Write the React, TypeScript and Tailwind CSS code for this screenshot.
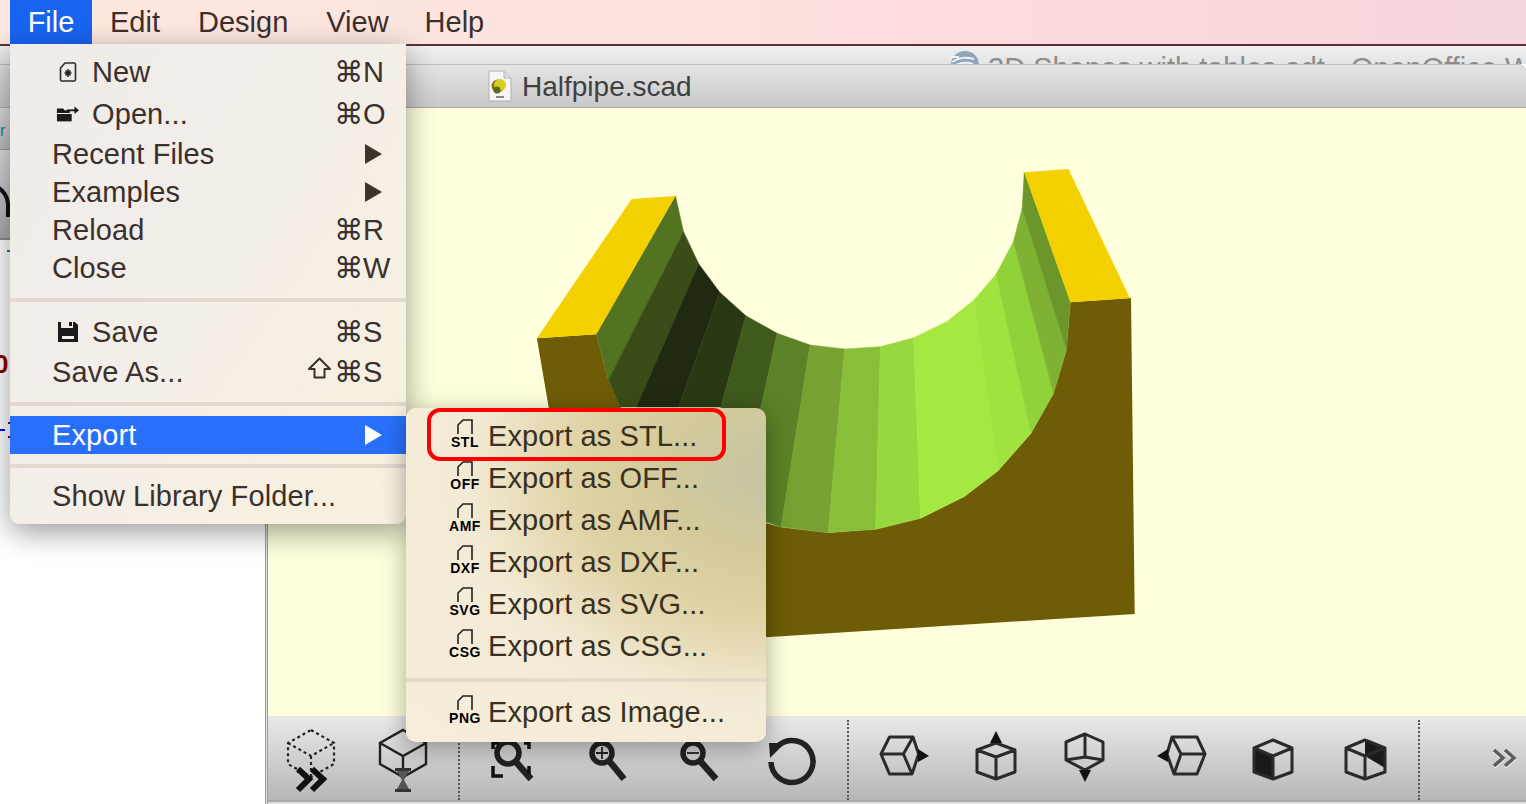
import type { ReactNode } from "react";

const strips: { points: string; color: string }[] = [
  { points: "675.5,196 683.5,231.7 608.4,380 596.3,334.3", color: "#52731f" },
  { points: "683.5,231.7 698.8,264 636.5,407 620.4,407 608.4,380", color: "#3a4d18" },
  { points: "698.8,264 719.7,292.3 678.7,407 636.5,407", color: "#1f2a10" },
  { points: "719.7,292.3 745.8,315.7 720.9,407 678.7,407", color: "#293914" },
  { points: "745.8,315.7 777.1,333.3 761,407 740,480 700,480 720.9,407", color: "#3f5a1c" },
  { points: "777.1,333.3 810.1,345 781.2,527 730,510 761,407", color: "#5b8226" },
  { points: "810.1,345 844.6,349 828.2,532.7 781.2,527", color: "#76a232" },
  { points: "844.6,349 880.4,346.7 875.6,529.3 828.2,532.7", color: "#89bf38" },
  { points: "880.4,346.7 913.7,337.7 920.6,518.3 875.6,529.3", color: "#98d83f" },
  { points: "913.7,337.7 946.7,321.7 964,496.7 920.6,518.3", color: "#a5e842" },
  { points: "946.7,321.7 974,300 998.1,470.7 964,496.7", color: "#a5e842" },
  { points: "974,300 996.1,274.3 1031,433.3 998.1,470.7", color: "#a0e23f" },
  { points: "996.1,274.3 1013.4,241.7 1053.5,393.3 1031,433.3", color: "#90d23a" },
  { points: "1013.4,241.7 1022.2,208.3 1066.4,350 1053.5,393.3", color: "#7fb232" },
  { points: "1022.2,208.3 1024.2,172.3 1070.4,302.3 1066.4,350", color: "#6c962a" },
];

function Model() {
  return (
    <svg viewBox="268 108 1258 608" className="block h-full w-full">
      <polygon
        points="536.9,338.3 596.3,334.3 608.4,380 620.4,407 700,500 765.9,523 781.2,527.3 828.2,532.7 875.6,529.3 920.6,518.3 964,496.7 998.1,470.7 1031,433.3 1053.5,393.3 1066.4,350 1070.4,302.3 1131,298 1134.7,614 765.9,637.3 590,650"
        fill="#6e5c07"
      />
      {strips.map((s) => (
        <polygon key={s.points} points={s.points} fill={s.color} stroke={s.color} strokeWidth="0.5" />
      ))}
      <polygon points="631.7,199 675.5,196 596.3,334.3 536.9,338.3" fill="#f3d000" />
      <polygon points="1024.2,172.3 1068.4,169 1129.9,298.3 1070.4,302.3" fill="#f3d000" />
    </svg>
  );
}

function DocIcon() {
  return (
    <svg width="18" height="22" viewBox="0 0 18 22">
      <path d="M6 2h9a1.5 1.5 0 0 1 1.5 1.5v15A1.5 1.5 0 0 1 15 20H3a1.5 1.5 0 0 1-1.5-1.5V7z" fill="none" stroke="#2b2b2b" strokeWidth="1.6" />
      <path d="M9 8v8M5.5 12h7M6.5 9.5l5 5M11.5 9.5l-5 5" stroke="#222" strokeWidth="1.5" />
    </svg>
  );
}

function FolderIcon() {
  return (
    <svg width="26" height="18" viewBox="0 0 26 18">
      <path d="M1 3h7l1 2h6v3H1z" fill="#1b1b1b" />
      <path d="M1 9h16v8H1z" fill="#1b1b1b" />
      <path d="M12 5h9" stroke="#1b1b1b" strokeWidth="2" />
      <path d="M20 1l5 4-5 4z" fill="#1b1b1b" />
    </svg>
  );
}

function SaveIcon() {
  return (
    <svg width="22" height="22" viewBox="0 0 22 22">
      <path d="M1 1h3v6h12V1h2l3 3v17H1z" fill="#1b1b1b" />
      <path d="M5 15h12v3H5z" fill="#f5efe9" />
      <path d="M12 1h3v4h-3z" fill="#1b1b1b" />
    </svg>
  );
}

function ShiftKey() {
  return (
    <svg width="23" height="22" viewBox="0 0 23 22" fill="none" className="absolute -left-[26px] top-[6px]">
      <path d="M11.5 1.5L22 12h-5.5v8.5h-10V12H1z" stroke="#3a302c" strokeWidth="2" strokeLinejoin="round" />
    </svg>
  );
}

function Arrow({ white }: { white?: boolean }) {
  return (
    <svg width="17" height="20" viewBox="0 0 17 20">
      <polygon points="0,0 17,10 0,20" fill={white ? "#ffffff" : "#3c3628"} />
    </svg>
  );
}

type MenuRow = {
  label: string;
  height: string;
  icon?: ReactNode;
  keys?: string;
  shift?: boolean;
  arrow?: boolean;
  active?: boolean;
};

function Row({ row }: { row: MenuRow }) {
  return (
    <div
      className={`flex items-center pr-[24px] ${row.height} ${row.active ? "bg-[#2870fb] text-white" : "text-[#3a302c]"} ${row.icon ? "pl-[46px]" : "pl-[42px]"}`}
    >
      {row.icon && <span className="mr-[12px] flex w-[24px] justify-center">{row.icon}</span>}
      <span className="mt-[2px] flex-1">{row.label}</span>
      {row.keys && (
        <span className="relative mt-[2px] w-[48px] whitespace-nowrap tracking-normal">
          {row.shift && <ShiftKey />}
          {row.keys}
        </span>
      )}
      {row.arrow && <Arrow white={row.active} />}
    </div>
  );
}

function Sep({ className }: { className: string }) {
  return <div className={`h-[4px] bg-[#e2dacf] ${className}`} />;
}

function FileMenu() {
  return (
    <div className="absolute left-[10px] top-[44px] h-[480px] w-[396px] rounded-b-[10px] bg-[linear-gradient(125deg,#efebe8_0%,#f3eee8_45%,#f8f1df_100%)] pt-[8px] tracking-[0.1px] shadow-[0_8px_30px_rgba(0,0,0,0.4)]">
      <Row row={{ label: "New", height: "h-[40px] pb-[1px]", icon: <DocIcon />, keys: "⌘N" }} />
      <Row row={{ label: "Open...", height: "h-[43px]", icon: <FolderIcon />, keys: "⌘O" }} />
      <Row row={{ label: "Recent Files", height: "h-[38px]", arrow: true }} />
      <Row row={{ label: "Examples", height: "h-[38px]", arrow: true }} />
      <Row row={{ label: "Reload", height: "h-[38px]", keys: "⌘R" }} />
      <Row row={{ label: "Close", height: "h-[38px]", keys: "⌘W" }} />
      <Sep className="mb-[10px] mt-[11px]" />
      <Row row={{ label: "Save", height: "h-[40px]", icon: <SaveIcon />, keys: "⌘S" }} />
      <Row row={{ label: "Save As...", height: "h-[40px]", keys: "⌘S", shift: true }} />
      <Sep className="mb-[10px] mt-[10px]" />
      <Row row={{ label: "Export", height: "h-[38px]", arrow: true, active: true }} />
      <Sep className="mb-[9px] mt-[10px]" />
      <Row row={{ label: "Show Library Folder...", height: "h-[38px]" }} />
    </div>
  );
}

function ExportRow({ format, label }: { format: string; label: string }) {
  return (
    <div className="flex h-[42px] items-center pl-[42px] text-[#39301d]">
      <span className="mr-[6px] flex h-[34px] w-[34px] flex-col items-center">
        <svg width="16" height="16" viewBox="0 0 16 16">
          <path d="M1 15V6l5-5h9v14" fill="none" stroke="#222" strokeWidth="1.6" />
        </svg>
        <span className="text-[14px] font-bold leading-[14px] tracking-[0.5px] text-black">{format}</span>
      </span>
      <span className="mt-[2px]">{label}</span>
    </div>
  );
}

function ExportMenu() {
  return (
    <div className="absolute left-[406px] top-[408px] h-[334px] w-[360px] rounded-[10px] bg-[radial-gradient(ellipse_at_100%_20%,#c4c5a3_0%,#d3ca9b_20%,#e0d3a6_38%,#f3ebd6_60%,#f6eedb_100%)] pt-[7px] tracking-[0.1px] shadow-[0_6px_24px_rgba(0,0,0,0.35)]">
      <ExportRow format="STL" label="Export as STL..." />
      <ExportRow format="OFF" label="Export as OFF..." />
      <ExportRow format="AMF" label="Export as AMF..." />
      <ExportRow format="DXF" label="Export as DXF..." />
      <ExportRow format="SVG" label="Export as SVG..." />
      <ExportRow format="CSG" label="Export as CSG..." />
      <div className="mb-[9px] mt-[11px] h-[4px] bg-[#e2d9c6]" />
      <ExportRow format="PNG" label="Export as Image..." />
    </div>
  );
}

function ToolIcon({ children }: { children: ReactNode }) {
  return (
    <svg width="64" height="64" viewBox="0 0 64 64" fill="none" className="shrink-0 overflow-visible">
      {children}
    </svg>
  );
}

function Dotted({ className }: { className: string }) {
  return <div className={`h-[80px] w-0 shrink-0 self-end border-l-2 border-dotted border-[#555555] ${className}`} />;
}

function Toolbar() {
  const line = { stroke: "#2a2a2a", strokeWidth: 3, strokeLinejoin: "round" as const };
  return (
    <div className="h-[88px] shrink-0 bg-[#dddddd]">
      <div className="flex h-[86px] items-center border-b-[2px] border-[#a8a8a8] bg-[linear-gradient(#e9e9e9,#b7b7b7)] pl-[11px]">
        <div className="flex gap-[28px]">
          <ToolIcon>
            <g stroke="#222" strokeWidth="2.2" strokeDasharray="3 3">
              <path d="M32 4l23 13v21L32 51 9 38V17zM9 17l23 13 23-13M32 30v21" />
            </g>
            <path d="M19 43l11 10-11 11M33 43l11 10-11 11" stroke="#111" strokeWidth="6" />
          </ToolIcon>
          <ToolIcon>
            <path d="M32 4l23 13v21L32 51 9 38V17zM9 17l23 13 23-13M32 30v12" stroke="#222" strokeWidth="2.4" />
            <path d="M24 42h16v3H24zM24 63h16v3H24z" fill="#333" />
            <path d="M26 45h12l-5 9 5 9H26l5-9z" fill="#555" />
          </ToolIcon>
        </div>
        <Dotted className="ml-[23px]" />
        <div className="ml-[21px] flex gap-[29px]">
          <ToolIcon>
            <circle cx="27" cy="27" r="11" stroke="#222" strokeWidth="5.5" />
            <path d="M35 36l15 17" stroke="#222" strokeWidth="6.5" />
            <path d="M12 40v10h10M12 23v-6h6M48 40v8M43 17h5v6" stroke="#111" strokeWidth="3.5" />
          </ToolIcon>
          <ToolIcon>
            <circle cx="28" cy="27" r="10" stroke="#222" strokeWidth="5.5" />
            <path d="M36 36l14 17" stroke="#222" strokeWidth="6.5" />
            <path d="M28 21v12M22 27h12" stroke="#222" strokeWidth="1.8" />
          </ToolIcon>
          <ToolIcon>
            <circle cx="26" cy="27" r="10" stroke="#222" strokeWidth="5.5" />
            <path d="M34 36l15 17" stroke="#222" strokeWidth="6.5" />
            <path d="M20 27h12" stroke="#222" strokeWidth="1.8" />
          </ToolIcon>
          <ToolIcon>
            <path d="M19 19A21 21 0 1 1 11 36" stroke="#222" strokeWidth="5.5" />
            <polygon points="9,17 25,17 10,32" fill="#222" />
          </ToolIcon>
        </div>
        <Dotted className="ml-[23px]" />
        <div className="ml-[23px] flex gap-[28px]">
          <ToolIcon>
            <path d="M9 28L17.5 11H41L46.6 28 40 48H17.5zM9 28h22.4M31.4 28L41 11M31.4 28L40 48" {...line} />
            <polygon points="46,23 57,30 46,36" fill="#111" />
          </ToolIcon>
          <ToolIcon>
            <path d="M32 17l19 7v22l-19 7-19-7V24zM13 24l19 7 19-7M32 31v22" {...line} />
            <polygon points="32,5 38,17 26,17" fill="#111" />
          </ToolIcon>
          <ToolIcon>
            <path d="M29 8l18 8v18l-18 10-19-10V16zM29 8v23M10 34l19-3 18 3" {...line} />
            <polygon points="23,44 35,44 29,56" fill="#111" />
          </ToolIcon>
          <ToolIcon>
            <path d="M19 28L24 11H49L57 28 49 48H26zM57 28H33M33 28L24 11M33 28L26 48" {...line} />
            <polygon points="20,23 9,30 20,36" fill="#111" />
          </ToolIcon>
          <ToolIcon>
            <polygon points="14,22 33,30 33,53 14,46" fill="#1a1a1a" />
            <path d="M33 14l19 8v24l-19 7-19-7V22zM14 22l19 8 19-8M33 30v23" {...line} />
          </ToolIcon>
          <ToolIcon>
            <polygon points="33,14 53,22 53,42 33,30" fill="#1a1a1a" />
            <path d="M33 14l20 8v24l-20 7-19-7V22zM14 22l19 8 20-8M33 30v23" {...line} />
          </ToolIcon>
        </div>
        <Dotted className="ml-[22px]" />
        <svg width="28" height="20" viewBox="0 0 28 20" fill="none" className="ml-[71px]">
          <path d="M3 3l9 8-9 8M14 3l9 8-9 8" stroke="#ffffff" strokeWidth="3.5" />
          <path d="M3 2l9 8-9 8M14 2l9 8-9 8" stroke="#5c5c5c" strokeWidth="3.5" />
        </svg>
      </div>
    </div>
  );
}

function ScadIcon() {
  return (
    <svg width="26" height="32" viewBox="0 0 26 32">
      <path d="M2 1h15l7 7v23H2z" fill="#f6f6f6" stroke="#b0b0b0" />
      <path d="M17 1v7h7" fill="#dddddd" stroke="#b0b0b0" />
      <circle cx="11" cy="16" r="6.5" fill="#8d6b2a" />
      <circle cx="13" cy="15" r="6" fill="#d8cc1c" />
      <circle cx="10" cy="20" r="3.5" fill="#5d6b14" />
      <path d="M9 26h8v2H9z" fill="#888" />
    </svg>
  );
}

export default function App() {
  return (
    <div className="relative flex h-[804px] w-[1526px] flex-col overflow-hidden bg-white text-[29px] [font-family:'Liberation_Sans','DejaVu_Sans',sans-serif]">
      {/* mac menu bar */}
      <div className="flex h-[46px] shrink-0 border-b-[2px] border-[#5e3036] bg-[linear-gradient(90deg,#fde8df_0%,#fde3df_45%,#fbdadd_70%,#f3d6da_100%)] text-[#3d2f2c]">
        <div className="ml-[10px] flex h-[44px] w-[82px] items-center justify-center bg-[#1764f1] pt-[2px] text-white">File</div>
        <div className="flex h-[44px] items-center gap-[38px] pl-[18px] pt-[2px]">
          <span>Edit</span>
          <span>Design</span>
          <span>View</span>
          <span className="-ml-[2px]">Help</span>
        </div>
      </div>

      {/* window behind */}
      <div className="flex h-[18px] shrink-0 items-start overflow-hidden bg-[linear-gradient(#f0f0f0,#e4e4e4)] pl-[950px] text-[#8c8c8c]">
        <svg width="30" height="28" viewBox="0 0 30 28" className="mr-[8px] mt-[5px] shrink-0">
          <circle cx="15" cy="14" r="14" fill="#8ea4b8" />
          <path d="M1 6h8M2 11c8-5 14-5 22-3M3 15c8-4 14-4 20-2" stroke="#f2f2f2" strokeWidth="2" fill="none" />
        </svg>
        <span className="mt-[7px] whitespace-nowrap text-[29px] leading-[30px]">3D Shapes with tables.odt - OpenOffice Writer</span>
      </div>

      {/* document title */}
      <div className="flex h-[44px] shrink-0 items-center rounded-tr-[8px] border-y border-t-[#bdbdbd] border-b-[#a9a9a9] bg-[linear-gradient(#e4e4e4,#c9c9c9)] pl-[487px] text-[28px] text-[#3f3f42]">
        <ScadIcon />
        <span className="ml-[9px] mt-[2px]">Halfpipe.scad</span>
      </div>

      <div className="flex min-h-0 flex-1">
        <div className="relative flex w-[265px] shrink-0 flex-col overflow-hidden">
          <div className="h-[42px] border-b border-[#999999] bg-[linear-gradient(#dedede,#bcbcbc)]" />
          <div className="h-[90px] border-b-2 border-[#8d8d8d] bg-[linear-gradient(#dedede,#aaaaaa)]" />
          <div className="flex-1 bg-white" />
          <span className="absolute left-0 top-[15px] text-[16px] leading-none text-[#1c7fa8]">r</span>
          <span className="absolute left-[-12px] top-[75px] h-[34px] w-[22px] rounded-tr-full border-r-[4px] border-t-[4px] border-[#111111]" />
          <span className="absolute left-[7px] top-[142px] h-[2px] w-[3px] bg-[#128080]" />
          <span className="absolute left-[-6px] top-[243px] text-[26px] font-bold leading-none text-[#8a0000]">0</span>
          <span className="absolute left-0 top-[321px] h-[2px] w-[5px] bg-[#0000e0]" />
          <span className="absolute left-[8px] top-[314px] h-[2px] w-[2px] bg-[#8a0000]" />
          <span className="absolute left-[8px] top-[328px] h-[2px] w-[2px] bg-[#8a0000]" />
        </div>
        <div className="w-[3px] shrink-0 border-x border-x-[#9a9a9a] bg-[#e4e4e4]" />
        <div className="flex min-w-0 flex-1 flex-col">
          <div className="min-h-0 flex-1 bg-[#ffffdd]">
            <Model />
          </div>
          <Toolbar />
        </div>
      </div>

      <FileMenu />
      <ExportMenu />
      <div className="absolute left-[427px] top-[408px] h-[53px] w-[299px] rounded-[13px] border-[4px] border-[#ff0000]" />
    </div>
  );
}
